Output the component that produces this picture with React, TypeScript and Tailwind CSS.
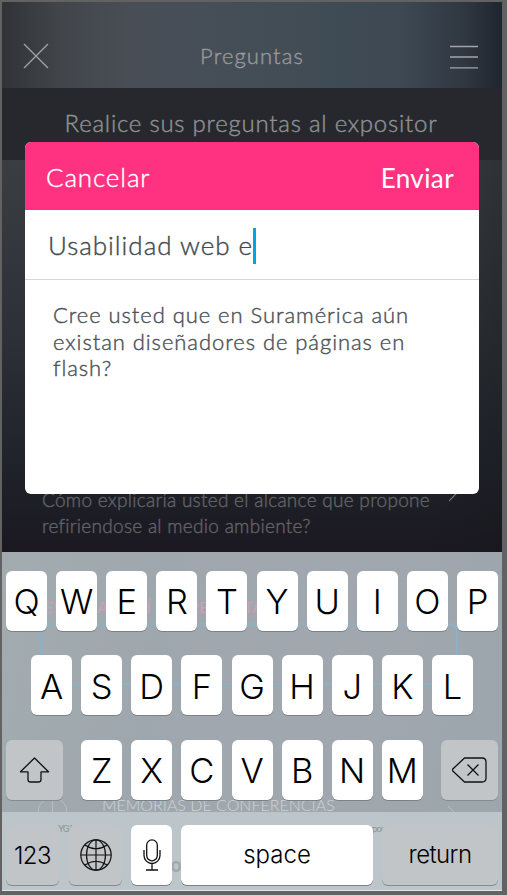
import type { ReactNode } from 'react';

const cap = 'flex shrink-0 items-center justify-center rounded-[6px] h-[60px]';
const light = 'bg-white shadow-[0_1px_0_#7d8287]';
const gray = 'bg-[#c1c5c8] shadow-[0_1px_0_#858b90]';
const book = 'font-light [-webkit-text-stroke:0.4px_currentColor]';

function Key({ children }: { children: ReactNode }) {
  return (
    <div className={`${cap} ${light} w-[41px] text-[34.5px] font-light leading-none text-black`}>
      <span className="pt-[3px]">{children}</span>
    </div>
  );
}

function Letters({ letters }: { letters: string }) {
  return (
    <div className="flex gap-[9.11px]">
      {letters.split('').map((l) => (
        <Key key={l}>{l}</Key>
      ))}
    </div>
  );
}

function Header() {
  return (
    <header className="flex h-[86px] shrink-0 items-center justify-between bg-[linear-gradient(90deg,#303236_0%,#42464b_12%,#494e56_25%,#454e57_45%,#404c55_65%,#3d4852_80%,#303842_92%,#202630_100%)] pl-[21px] pr-6 pt-[22px]">
      <svg className="size-[26px]" viewBox="0 0 26 26" fill="none" stroke="#a2a4a6" strokeWidth="1.3">
        <path d="M1 1 25 25M25 1 1 25" />
      </svg>
      <h1 className={`${book} pb-[2px] pl-[5px] text-[22px] tracking-[1.1px] text-[#97999c]`}>Preguntas</h1>
      <svg className="mt-0.5 h-6 w-7" viewBox="0 0 28 24" fill="none" stroke="#a2a4a6" strokeWidth="1.3">
        <path d="M0 1.500H28M0 12H28M0 22.800H28" />
      </svg>
    </header>
  );
}

function Modal() {
  return (
    <section className="absolute left-[23px] top-[140px] h-[352px] w-[454px] overflow-hidden rounded-[6px] bg-white">
      <div className="flex h-[68px] items-center justify-between bg-[#ff3180] pl-[21px] pr-[25px] pt-[3px] text-[26px] text-white">
        <button className={`${book} tracking-[0.85px]`}>Cancelar</button>
        <button className="pt-px tracking-[0.4px]">Enviar</button>
      </div>
      <div className={`${book} flex h-[70px] items-center border-b border-[#d5d6d7] pl-[23px] text-[26px] text-[#434b50]`}>
        <span className="pt-[2px] tracking-[0.98px]">Usabilidad web e</span>
        <i className="mt-[2px] h-9 w-[3px] bg-[#00a5dc]" />
      </div>
      <p className={`${book} pl-7 pt-[22px] text-[22px] leading-[26.7px] tracking-[0.94px] text-[#4a5156]`}>
        Cree usted que en Suramérica aún
        <br />
        existan diseñadores de páginas en
        <br />
        flash?
      </p>
    </section>
  );
}

function Backdrop() {
  return (
    <svg className="absolute inset-0 h-[340px] w-[500px]" viewBox="0 0 500 340" fill="none">
      <path d="M39 132V80Q39 72 47 72H447Q455 72 455 80V132H39" stroke="#8ab2c4" strokeWidth="2" />
      <path d="M36 260A14.5 14.5 0 0 1 65 260M50.500 246V260M446 254L452 260" stroke="#b8bfc4" />
    </svg>
  );
}

function Keyboard() {
  return (
    <div className="relative h-[339px] w-[500px] shrink-0 overflow-hidden bg-[linear-gradient(100deg,#a2acaf_0%,#9fa7ae_30%,#a1a7ae_60%,#9da6ad_100%)] font-['Inter','Liberation_Sans',sans-serif]">
      <div className="absolute inset-x-0 bottom-0 h-[79px] border-b border-[#e1e5e6] bg-[#bcc5c9]" />
      <Backdrop />
      <div className="absolute left-[42px] top-[45px] whitespace-nowrap font-['Lato',sans-serif] text-[16px] leading-5 text-[#cf9fb4]">ESCRIBA AQUÍ SU PREGUNTA</div>
      <div className="absolute left-[100px] top-[243px] whitespace-nowrap font-['Lato',sans-serif] text-[16px] font-light leading-5 text-[#ced4d8]">MEMORIAS DE CONFERENCIAS</div>
      <div className="absolute left-[56px] top-[271px] text-[9px] leading-3 tracking-[-1px] text-[#8c9498]">YGA</div>
      <div className="absolute left-[370px] top-[271px] text-[9px] leading-3 tracking-[-1px] text-[#8c9498]">poo</div>
      <div className="absolute left-[168px] top-[301px] text-[20px] font-bold leading-6 text-[#a1aaae]">oc</div>

      <div className="relative flex flex-col items-center gap-[24.700px] pt-[18.600px]">
        <Letters letters="QWERTYUIOP" />
        <Letters letters="ASDFGHJKL" />
        <div className="flex">
          <div className={`${cap} ${gray} mr-[18.500px] w-[56.500px]`}>
            <svg className="h-[26px] w-[31px]" viewBox="0 0 31 26" fill="none" stroke="#111" strokeWidth="1.3" strokeLinejoin="round">
              <path d="M15.500 1 29.500 14.800H22V22.500Q22 25 19.500 25H11.500Q9 25 9 22.500V14.800H1.500Z" />
            </svg>
          </div>
          <Letters letters="ZXCVBNM" />
          <div className={`${cap} ${gray} ml-[18.500px] w-[56.500px]`}>
            <svg className="h-[26px] w-[35px]" viewBox="0 0 35 26" fill="none" stroke="#111" strokeWidth="1.3" strokeLinejoin="round">
              <path d="M12.500 1H30Q34 1 34 5V21Q34 25 30 25H12.500L.8 14Q0 13 .8 12Z" />
              <path d="M15.500 7.500 26.500 18.500M26.500 7.500 15.500 18.500" />
            </svg>
          </div>
        </div>
        <div className="flex w-[492px] text-[24px] font-light leading-none text-black">
          <div className={`${cap} ${gray} mr-[10px] w-[53px]`}>
            <span className="pt-0.5 tracking-[-0.500px]">123</span>
          </div>
          <div className={`${cap} ${gray} mr-[9px] w-[53px]`}>
            <svg className="size-8" viewBox="0 0 32 32" fill="none" stroke="#111" strokeWidth="1.2">
              <circle cx="16" cy="16" r="15.200" />
              <ellipse cx="16" cy="16" rx="9.500" ry="15.200" />
              <path d="M16 .8V31.200M.8 16H31.200M5 6Q16 13.500 27 6M5 26Q16 18.500 27 26" />
            </svg>
          </div>
          <div className={`${cap} ${light} mr-[9px] w-[41px]`}>
            <svg className="h-8 w-[18px]" viewBox="0 0 18 32" fill="none" stroke="#111" strokeWidth="1.300">
              <rect x="3.700" y=".8" width="10.600" height="21" rx="5.300" />
              <path d="M1 11V16.500A8 8 0 0 0 17 16.500V11M9 24.500V31M3 31H15" />
            </svg>
          </div>
          <div className={`${cap} ${light} mr-[9px] w-[192px]`}>space</div>
          <div className={`${cap} ${gray} w-[116px] tracking-[-0.600px]`}>return</div>
        </div>
      </div>
    </div>
  );
}

export default function App() {
  return (
    <div className="h-[895px] w-[507px] overflow-hidden bg-[#626262] pl-[2px] pt-[2px] font-['Lato','Liberation_Sans',sans-serif]">
      <main className="relative flex h-[889px] w-[500px] flex-col">
        <Header />
        <div className={`${book} flex h-[72px] shrink-0 justify-center bg-[#26282d] pr-0.5 pt-[17px] text-[24px] leading-9 tracking-[0.77px] text-[#909294]`}>
          Realice sus preguntas al expositor
        </div>
        <div className="flex h-[392px] shrink-0 flex-col justify-end bg-[linear-gradient(90deg,transparent_85%,#15171a55_100%),linear-gradient(180deg,#3a3e43_0%,#2d3036_45%,#20242b_75%,#1b1821_100%)] pb-[12px]">
          <div className="flex items-start justify-between pl-10 pr-[45px]">
            <p className={`${book} whitespace-nowrap text-[19px] leading-[26.700px] tracking-[0.280px] text-[#616265]`}>
              Cómo explicaría usted el alcance que propone
              <br />
              refiriendose al medio ambiente?
            </p>
            <svg className="h-4 w-2" viewBox="0 0 8 16" fill="none" stroke="#737578" strokeWidth="1.200">
              <path d="M0 14 8 6" />
            </svg>
          </div>
        </div>
        <Keyboard />
        <Modal />
      </main>
    </div>
  );
}
